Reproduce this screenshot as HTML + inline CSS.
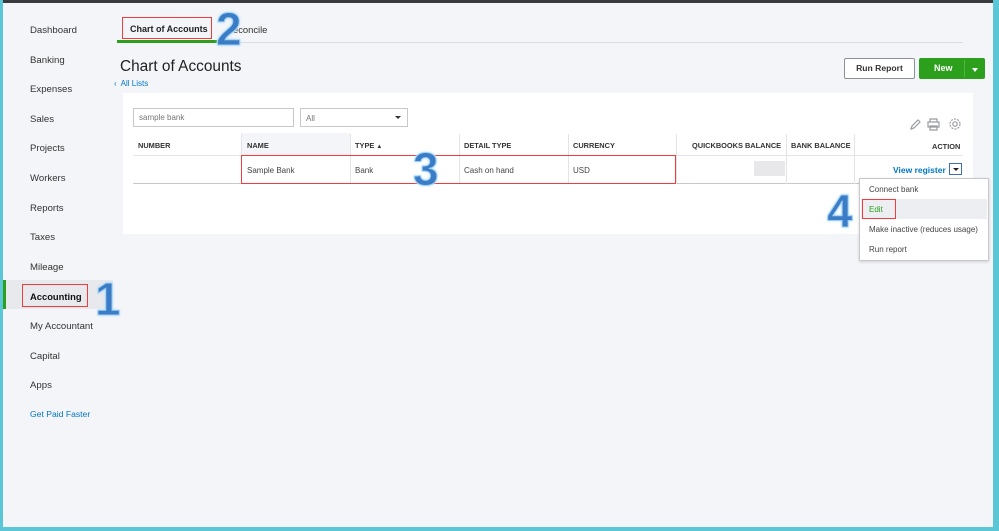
<!DOCTYPE html>
<html><head><meta charset="utf-8"><style>
*{margin:0;padding:0;box-sizing:border-box}
body{width:999px;height:531px;overflow:hidden;background:#f4f5f8;font-family:"Liberation Sans",sans-serif;color:#393a3d;position:relative}
.a{position:absolute}
.nav{left:30px;font-size:9.6px;color:#333}
.big{position:absolute;font:bold 46px "Liberation Sans",sans-serif;color:#3a7cc5;-webkit-text-stroke:1px #9fd0f3;text-shadow:0 0 3px #bfe3fb,0 0 2px #bfe3fb;line-height:1}
.th{position:absolute;top:141px;font-size:7.4px;font-weight:bold;color:#333}
.td{position:absolute;top:166px;font-size:8px;color:#444}
.vl{position:absolute;width:1px;background:#e3e4e7}
</style></head><body>
<div class="a" style="left:0;top:0;width:999px;height:3px;background:#393a3d"></div>
<div class="a" style="left:0;top:0;width:3px;height:531px;background:#5ac6d6"></div>
<div class="a" style="right:0;top:0;width:6px;height:531px;background:#5ac6d6"></div>
<div class="a" style="left:0;bottom:0;width:999px;height:4px;background:#5ac6d6"></div>

<div class="nav a" style="top:25px">Dashboard</div>
<div class="nav a" style="top:55px">Banking</div>
<div class="nav a" style="top:84px">Expenses</div>
<div class="nav a" style="top:114px">Sales</div>
<div class="nav a" style="top:143px">Projects</div>
<div class="nav a" style="top:173px">Workers</div>
<div class="nav a" style="top:203px">Reports</div>
<div class="nav a" style="top:232px">Taxes</div>
<div class="nav a" style="top:262px">Mileage</div>
<div class="a" style="left:3px;top:280px;width:110px;height:29px;background:#e8e9ec"></div>
<div class="a" style="left:3px;top:280px;width:3px;height:29px;background:#2ca01c"></div>
<div class="a" style="left:22px;top:284px;width:66px;height:23px;border:1px solid #f03c3c"></div>
<div class="nav a" style="top:291px;font-weight:bold;color:#111;font-size:9.4px">Accounting</div>
<div class="nav a" style="top:321px">My Accountant</div>
<div class="nav a" style="top:351px">Capital</div>
<div class="nav a" style="top:380px">Apps</div>
<div class="nav a" style="top:409px;font-size:8.6px;color:#0077c5">Get Paid Faster</div>
<div class="big" style="left:95px;top:276px">1</div>

<div class="a" style="left:117px;top:42px;width:846px;height:1px;background:#dcdde0"></div>
<div class="a" style="left:117px;top:40px;width:100px;height:3px;background:#2ca01c"></div>
<div class="a" style="left:122px;top:17px;width:90px;height:22px;border:1px solid #f03c3c"></div>
<div class="a" style="left:130px;top:24px;font-size:9px;font-weight:bold;color:#222">Chart of Accounts</div>
<div class="a" style="left:233px;top:24px;font-size:9.4px;color:#333">econcile</div>
<div class="big" style="left:216px;top:6px">2</div>

<div class="a" style="left:120px;top:58px;font-size:15.4px;color:#222">Chart of Accounts</div>
<div class="a" style="left:114px;top:79px;font-size:8px;color:#0077c5">‹&nbsp; All Lists</div>

<div class="a" style="left:844px;top:58px;width:71px;height:21px;border:1px solid #8d9096;border-radius:2px;background:#fff;font-size:8.6px;font-weight:bold;text-align:center;line-height:19px;color:#333">Run Report</div>
<div class="a" style="left:919px;top:58px;width:66px;height:21px;background:#2ca01c;border-radius:2px;color:#fff;font-size:9px;font-weight:bold;line-height:21px;padding-left:15px">New</div>
<div class="a" style="left:964px;top:60px;width:1px;height:17px;background:#4cb83c"></div>
<div class="a" style="left:972px;top:68px;width:0;height:0;border-left:3px solid transparent;border-right:3px solid transparent;border-top:4px solid #fff"></div>

<div class="a" style="left:123px;top:93px;width:850px;height:141px;background:#fff"></div>
<div class="a" style="left:133px;top:108px;width:161px;height:19px;border:1px solid #c7c8cc;font-size:8px;color:#777;padding:4px 5px">sample bank</div>
<div class="a" style="left:300px;top:108px;width:108px;height:19px;border:1px solid #c7c8cc;font-size:8px;color:#777;padding:5px 5px">All</div>
<div class="a" style="left:395px;top:116px;border-left:3px solid transparent;border-right:3px solid transparent;border-top:3px solid #333"></div>
<svg class="a" style="left:908px;top:117px" width="56" height="15" viewBox="0 0 56 15" fill="none" stroke="#9a9ca0" stroke-width="1.2"><path d="M3 12l1-3 6-6 2 2-6 6z"/><path d="M22 5V2h7v3M20 5h11v5h-11zM22 9h7v4h-7z"/><circle cx="47" cy="7" r="2.2"/><circle cx="47" cy="7" r="5" stroke-dasharray="2 1.2"/></svg>

<div class="a" style="left:133px;top:155px;width:830px;height:1px;background:#e3e4e7"></div>
<div class="a" style="left:133px;top:183px;width:830px;height:1px;background:#c7c8cc"></div>
<div class="a" style="left:241px;top:133px;width:109px;height:22px;background:#f4f5f8"></div>
<div class="vl" style="left:241px;top:134px;height:50px"></div>
<div class="vl" style="left:350px;top:134px;height:50px"></div>
<div class="vl" style="left:459px;top:134px;height:50px"></div>
<div class="vl" style="left:568px;top:134px;height:50px"></div>
<div class="vl" style="left:676px;top:134px;height:50px"></div>
<div class="vl" style="left:786px;top:134px;height:50px"></div>
<div class="vl" style="left:854px;top:134px;height:50px"></div>
<div class="th" style="left:138px">NUMBER</div>
<div class="th" style="left:247px">NAME</div>
<div class="th" style="left:355px">TYPE <span style="font-size:6px">▲</span></div>
<div class="th" style="left:464px">DETAIL TYPE</div>
<div class="th" style="left:573px">CURRENCY</div>
<div class="th" style="left:692px">QUICKBOOKS BALANCE</div>
<div class="th" style="left:791px">BANK BALANCE</div>
<div class="th" style="left:932px;top:142px">ACTION</div>
<div class="a" style="left:241px;top:155px;width:435px;height:29px;border:1px solid #f03c3c"></div>
<div class="td" style="left:247px">Sample Bank</div>
<div class="td" style="left:355px">Bank</div>
<div class="td" style="left:464px">Cash on hand</div>
<div class="td" style="left:573px">USD</div>
<div class="a" style="left:754px;top:161px;width:31px;height:15px;background:#e8e8ea"></div>
<div class="a" style="left:893px;top:165px;font-size:8.5px;font-weight:bold;color:#0077c5">View register</div>
<div class="a" style="left:949px;top:163px;width:13px;height:12px;border:1px solid #3b6dbf"></div>
<div class="a" style="left:953px;top:168px;border-left:3px solid transparent;border-right:3px solid transparent;border-top:3px solid #222"></div>
<div class="big" style="left:413px;top:146px">3</div>

<div class="a" style="left:859px;top:178px;width:130px;height:83px;background:#fff;border:1px solid #c7c8cc;box-shadow:0 1px 3px rgba(0,0,0,.15)"></div>
<div class="a" style="left:861px;top:199px;width:126px;height:20px;background:#eceef1"></div>
<div class="a" style="left:862px;top:199px;width:34px;height:20px;border:1px solid #f03c3c"></div>
<div class="a" style="left:869px;top:185px;font-size:8px;color:#444">Connect bank</div>
<div class="a" style="left:869px;top:205px;font-size:8px;color:#2ca01c">Edit</div>
<div class="a" style="left:869px;top:225px;font-size:8px;color:#444">Make inactive (reduces usage)</div>
<div class="a" style="left:869px;top:245px;font-size:8px;color:#444">Run report</div>
<div class="big" style="left:827px;top:188px">4</div>
</body></html>
